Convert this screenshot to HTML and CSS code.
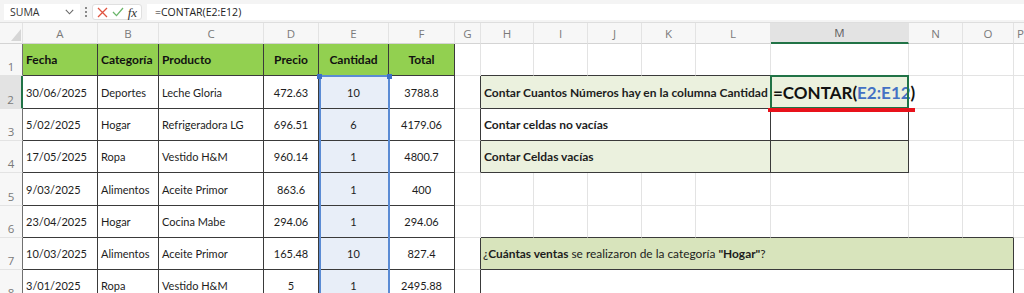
FILE: index.html
```html
<!DOCTYPE html>
<html lang="es">
<head>
<meta charset="utf-8">
<title>Hoja CONTAR</title>
<link rel="stylesheet" href="styles.css">
</head>
<body>
<div class="fbar">
  <div class="namebox"><span>SUMA</span>
    <svg class="chev" width="9" height="6" viewBox="0 0 9 6"><polyline points="0.8,0.8 4.5,4.8 8.2,0.8" fill="none" stroke="#6a6a6a" stroke-width="1.1"/></svg>
  </div>
  <div class="dots"><svg width="4" height="12" viewBox="0 0 4 12"><circle cx="2" cy="2" r="1" fill="#666"/><circle cx="2" cy="6" r="1" fill="#666"/><circle cx="2" cy="10" r="1" fill="#666"/></svg></div>
  <div class="fxbox">
    <svg width="11" height="11" viewBox="0 0 11 11"><path d="M1 1 L10 10 M10 1 L1 10" stroke="#e0533f" stroke-width="1.3" fill="none"/></svg>
    <svg width="12" height="10" viewBox="0 0 12 10"><polyline points="1,5 4.5,8.6 11,1" fill="none" stroke="#6ab56a" stroke-width="1.3"/></svg>
    <span class="fx">fx</span>
  </div>
  <div class="formula">=CONTAR(E2:E12)</div>
</div>

<div class="sheet">
  <!-- column headers -->
  <div class="c corner"><svg width="10" height="12" viewBox="0 0 10 12"><polygon points="10,0 10,12 0,12" fill="#d6d6d6"/></svg></div>
  <div class="c ch">A</div><div class="c ch">B</div><div class="c ch">C</div><div class="c ch">D</div><div class="c ch">E</div><div class="c ch">F</div><div class="c ch">G</div><div class="c ch">H</div><div class="c ch">I</div><div class="c ch">J</div><div class="c ch">K</div><div class="c ch">L</div><div class="c ch act">M</div><div class="c ch">N</div><div class="c ch">O</div><div class="c ch pcol">P</div>

  <!-- row 1 -->
  <div class="c rh">1</div>
  <div class="c t g">Fecha</div><div class="c t g">Categoría</div><div class="c t g">Producto</div><div class="c t g ctr">Precio</div><div class="c t g ctr">Cantidad</div><div class="c t g ctr">Total</div>
  <div class="c"></div><div class="c bb"></div><div class="c bb"></div><div class="c bb"></div><div class="c bb"></div><div class="c bb"></div><div class="c bb"></div><div class="c"></div><div class="c"></div><div class="c"></div>

  <!-- row 2 -->
  <div class="c rh act">2</div>
  <div class="c t">30/06/2025</div><div class="c t">Deportes</div><div class="c t">Leche Gloria</div><div class="c t ctr">472.63</div><div class="c t ctr e">10</div><div class="c t ctr">3788.8</div>
  <div class="c br"></div><div class="c t o b s5">Contar Cuantos Números hay en la columna Cantidad</div><div class="c t o big"><span>=CONTAR(<span class="ref">E2:E12</span>)</span></div>
  <div class="c"></div><div class="c"></div><div class="c"></div>

  <!-- row 3 -->
  <div class="c rh">3</div>
  <div class="c t">5/02/2025</div><div class="c t">Hogar</div><div class="c t">Refrigeradora LG</div><div class="c t ctr">696.51</div><div class="c t ctr e">6</div><div class="c t ctr">4179.06</div>
  <div class="c br"></div><div class="c t b s5">Contar celdas no vacías</div><div class="c t"></div>
  <div class="c"></div><div class="c"></div><div class="c"></div>

  <!-- row 4 -->
  <div class="c rh">4</div>
  <div class="c t">17/05/2025</div><div class="c t">Ropa</div><div class="c t">Vestido H&amp;M</div><div class="c t ctr">960.14</div><div class="c t ctr e">1</div><div class="c t ctr">4800.7</div>
  <div class="c br"></div><div class="c t o b s5">Contar Celdas vacías</div><div class="c t o"></div>
  <div class="c"></div><div class="c"></div><div class="c"></div>

  <!-- row 5 -->
  <div class="c rh">5</div>
  <div class="c t">9/03/2025</div><div class="c t">Alimentos</div><div class="c t">Aceite Primor</div><div class="c t ctr">863.6</div><div class="c t ctr e">1</div><div class="c t ctr">400</div>
  <div class="c"></div><div class="c"></div><div class="c"></div><div class="c"></div><div class="c"></div><div class="c"></div><div class="c"></div><div class="c"></div><div class="c"></div><div class="c"></div>

  <!-- row 6 -->
  <div class="c rh">6</div>
  <div class="c t">23/04/2025</div><div class="c t">Hogar</div><div class="c t">Cocina Mabe</div><div class="c t ctr">294.06</div><div class="c t ctr e">1</div><div class="c t ctr">294.06</div>
  <div class="c"></div><div class="c bb"></div><div class="c bb"></div><div class="c bb"></div><div class="c bb"></div><div class="c bb"></div><div class="c bb"></div><div class="c bb"></div><div class="c bb"></div><div class="c"></div>

  <!-- row 7 -->
  <div class="c rh">7</div>
  <div class="c t">10/03/2025</div><div class="c t">Alimentos</div><div class="c t">Aceite Primor</div><div class="c t ctr">165.48</div><div class="c t ctr e">10</div><div class="c t ctr">827.4</div>
  <div class="c br"></div><div class="c t q s8 ask"><span>¿<b>Cuántas ventas</b> se realizaron de la categoría <b>"Hogar"</b>?</span></div>
  <div class="c"></div>

  <!-- row 8 -->
  <div class="c rh">8</div>
  <div class="c t">3/01/2025</div><div class="c t">Ropa</div><div class="c t">Vestido H&amp;M</div><div class="c t ctr">5</div><div class="c t ctr e">1</div><div class="c t ctr">2495.88</div>
  <div class="c br"></div><div class="c t s8"></div>
  <div class="c"></div>

  <!-- overlays -->
  <div class="selrange"></div>
  <div class="activecell"></div>
  <div class="redline"></div>
</div>
</body>
</html>
```

FILE: styles.css
```css
html, body {
  margin: 0;
  padding: 0;
}
body {
  width: 1024px;
  height: 293px;
  overflow: hidden;
  background: #ffffff;
  font-family: Lato, "Liberation Sans", sans-serif;
}

/* formula bar */
.fbar {
  display: flex;
  align-items: stretch;
  height: 23px;
  box-sizing: border-box;
  padding: 4px 0 2px 0;
  background: #f4f4f4;
  border-bottom: 1px solid #dedede;
}
.namebox {
  width: 76px;
  margin-left: 4px;
  box-sizing: border-box;
  padding: 0 6px;
  background: #ffffff;
  display: flex;
  align-items: center;
  justify-content: space-between;
  font-family: "Open Sans", sans-serif;
  font-size: 10.5px;
  color: #333;
}
.dots {
  width: 12px;
  display: flex;
  align-items: center;
  justify-content: center;
}
.fxbox {
  width: 50px;
  box-sizing: border-box;
  background: #ffffff;
  border: 1px solid #e0e0e0;
  border-radius: 3px;
  display: flex;
  align-items: center;
  justify-content: space-around;
  padding: 0 2px;
}
.fx {
  font-family: "Liberation Serif", serif;
  font-style: italic;
  font-size: 13px;
  color: #333;
  line-height: 1;
}
.formula {
  flex: 1;
  margin-left: 5px;
  background: #ffffff;
  display: flex;
  align-items: center;
  padding-left: 8px;
  font-family: "Open Sans", sans-serif;
  font-size: 10.5px;
  color: #222;
}

/* sheet grid */
.sheet {
  position: relative;
  display: grid;
  grid-template-columns: 23px 75px 61px 105px 55px 70px 66px 26px 53px 54px 54px 54px 75px 138px 54px 51px 1fr;
  grid-template-rows: 21px 32px 33px 32px 32px 33px 32px 32px 32px;
}
.c {
  box-sizing: border-box;
  border-right: 1px solid #e3e3e3;
  border-bottom: 1px solid #e3e3e3;
  display: flex;
  align-items: center;
  padding: 0 3px;
  font-size: 11px;
  color: #1d1d1d;
  white-space: nowrap;
}
.corner {
  background: #f7f7f7;
  justify-content: flex-end;
  align-items: flex-end;
  padding: 0 1px 2px 0;
  border-bottom-color: #d4d4d4;
}
.ch {
  background: #f7f7f7;
  justify-content: center;
  padding: 0;
  font-family: "Open Sans", sans-serif;
  font-size: 11.5px;
  color: #7a7a7a;
  border-bottom-color: #d4d4d4;
}
.ch.act {
  background: #e3e3e3;
  border-bottom: 2px solid #217346;
  color: #5f5f5f;
}
.pcol {
  justify-content: flex-start;
  padding-left: 3px;
}
.rh {
  background: #f7f7f7;
  justify-content: center;
  align-items: flex-end;
  padding: 0 0 1px 0;
  font-family: "Open Sans", sans-serif;
  font-size: 11.5px;
  color: #7a7a7a;
  border-right-color: #707070;
}
.rh.act {
  background: #e3e3e3;
  border-right: 2px solid #217346;
}

.t {
  border-right-color: #3a3a3a;
  border-bottom-color: #3a3a3a;
}
.br { border-right-color: #3a3a3a; }
.bb { border-bottom-color: #3a3a3a; }
.g {
  background: #92d050;
  font-weight: 700;
  font-size: 12px;
  color: #111;
}
.ctr { justify-content: center; }
.e { background: #e8eef8; }
.o { background: #ebf1de; }
.q { background: #d8e4bc; }
.b { font-weight: 700; font-size: 12px; }
.s5 { grid-column: span 5; }
.s8 { grid-column: span 8; }
.ask { font-size: 11.9px; padding-left: 2px; }
.ask b { font-weight: 700; }
.big {
  font-size: 17px;
  font-weight: 700;
  padding-left: 2px;
  color: #111;
}
.ref { color: #4472c4; }

/* overlays */
.selrange {
  position: absolute;
  grid-column: 6 / 7;
  grid-row: 3 / 10;
  left: 0;
  right: -1px;
  top: -1px;
  bottom: 0;
  border: 2px solid #5b8bd4;
  border-bottom: none;
  pointer-events: none;
}
.selrange::before,
.selrange::after {
  content: "";
  position: absolute;
  top: -3px;
  width: 5px;
  height: 5px;
  background: #3d6fc6;
}
.selrange::before { left: -4px; }
.selrange::after { right: -4px; }
.activecell {
  position: absolute;
  grid-column: 14 / 15;
  grid-row: 3 / 4;
  left: -1px;
  right: 0;
  top: -1px;
  bottom: 0;
  border: 2px solid #217346;
  pointer-events: none;
}
.redline {
  position: absolute;
  grid-column: 14 / 15;
  grid-row: 3 / 4;
  left: -3px;
  right: -6px;
  bottom: -3px;
  height: 4px;
  background: #e8121b;
}
```
